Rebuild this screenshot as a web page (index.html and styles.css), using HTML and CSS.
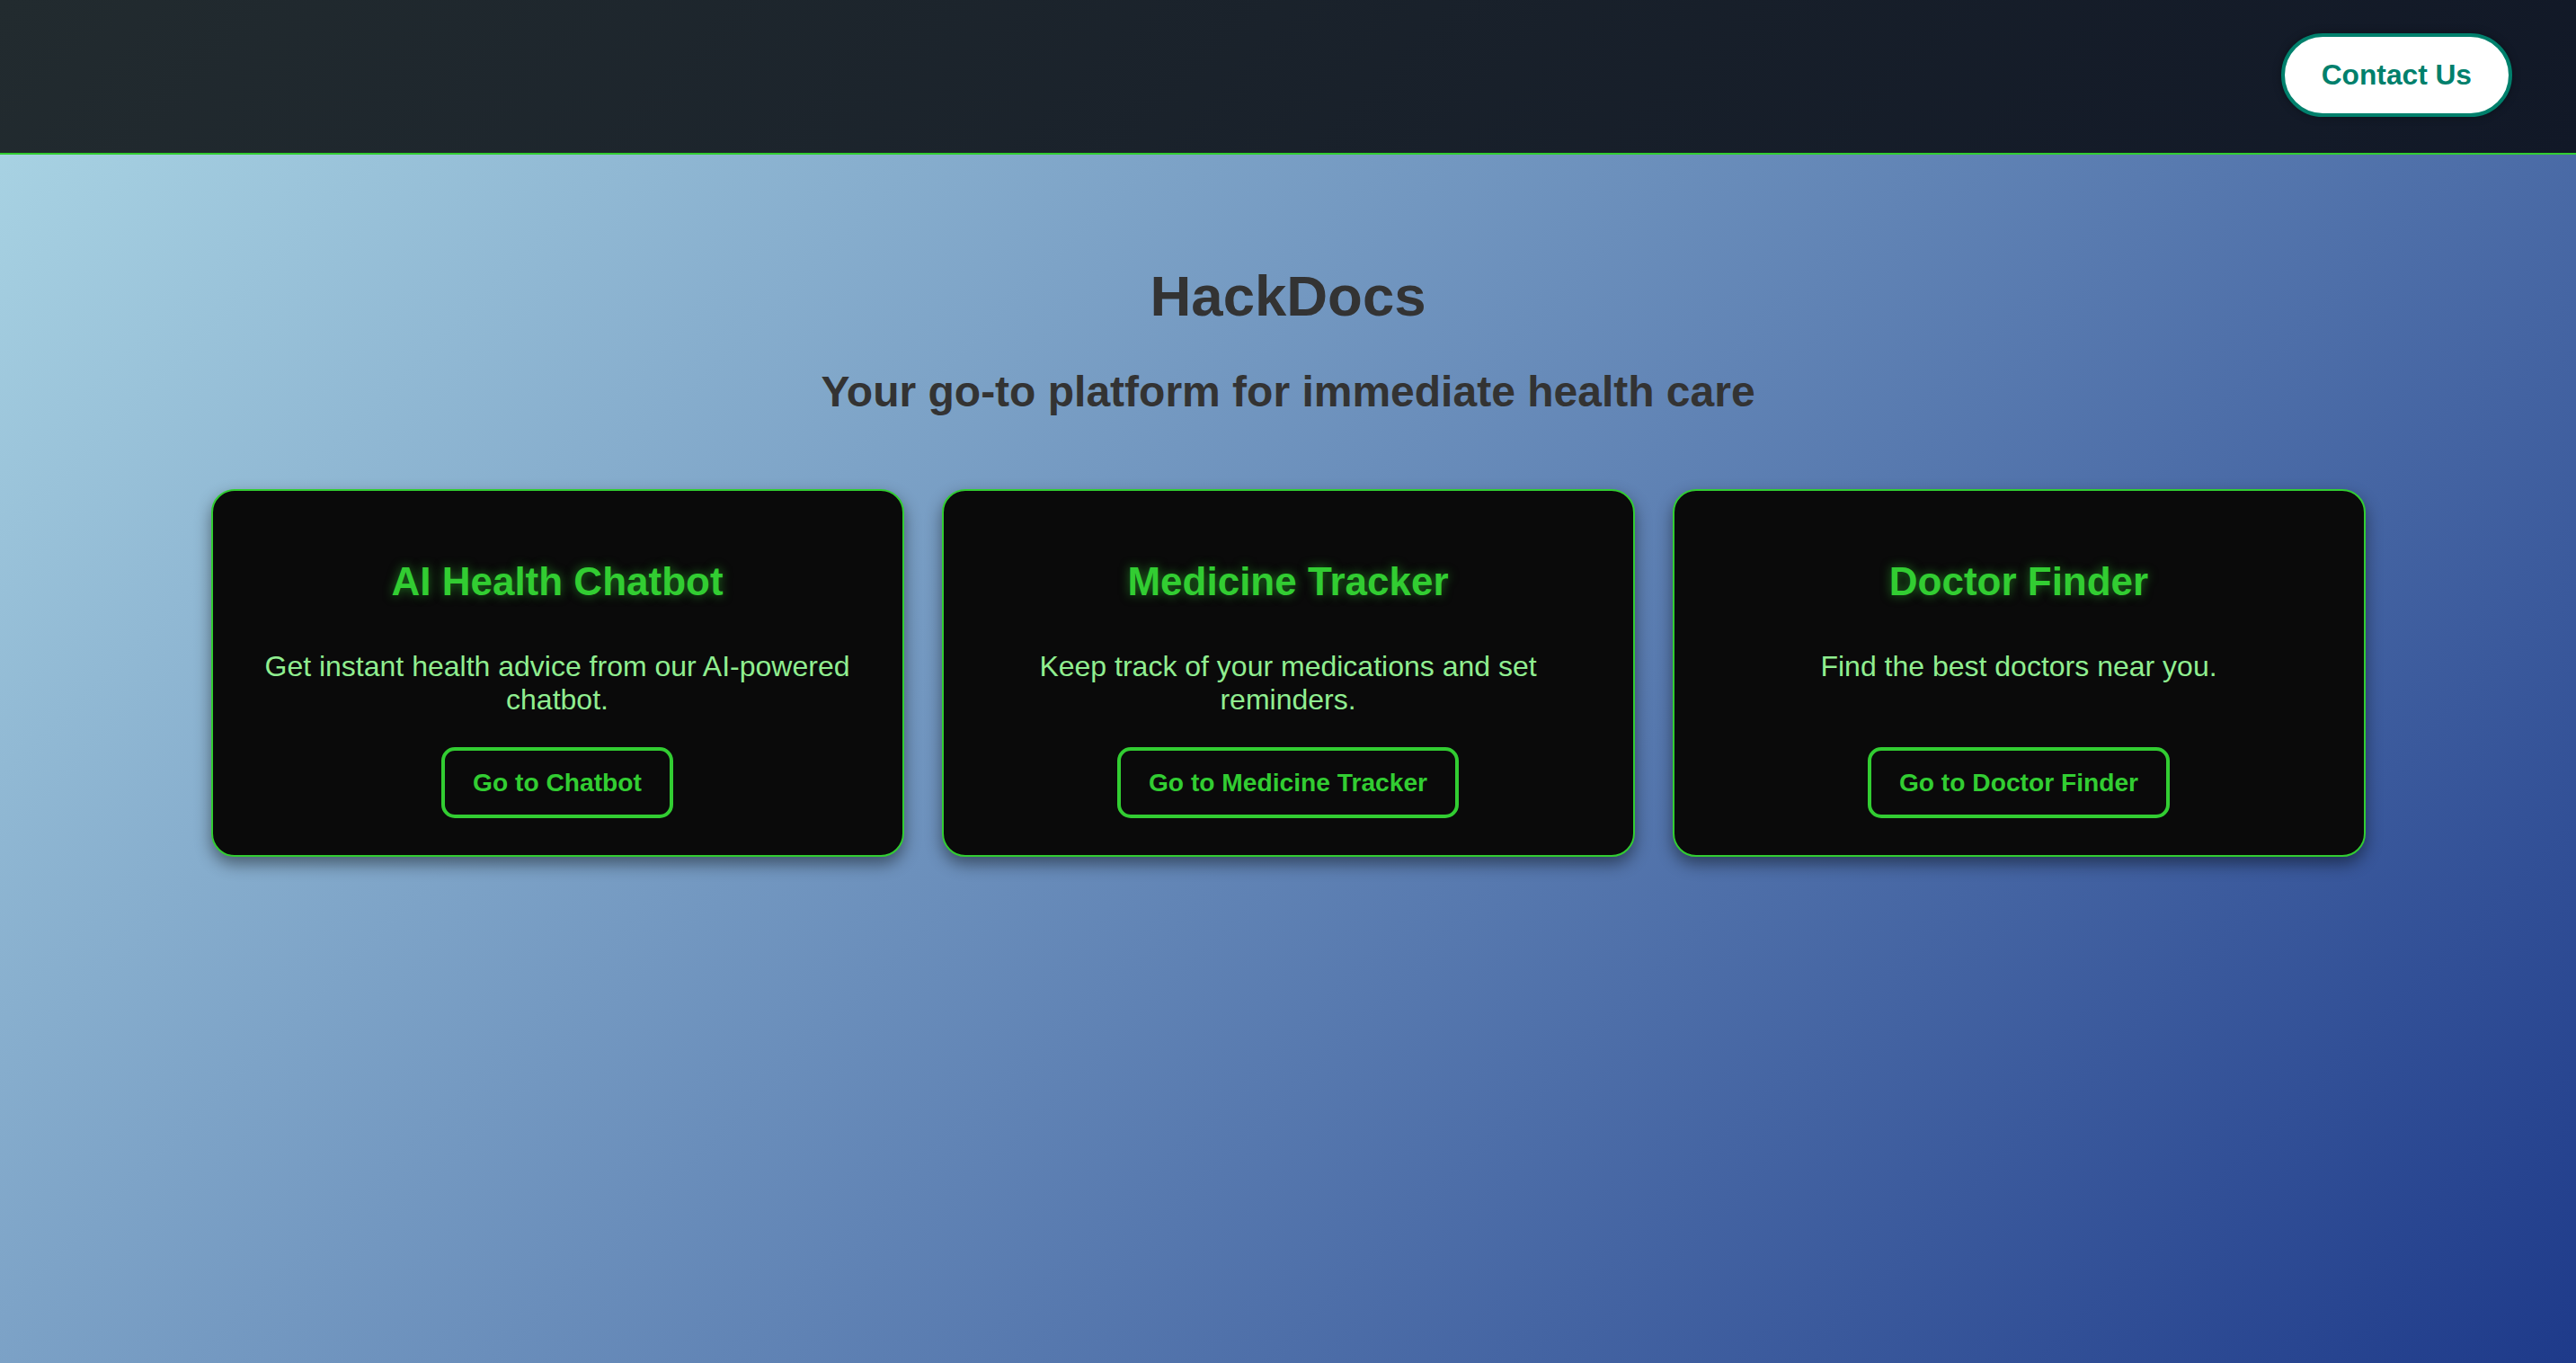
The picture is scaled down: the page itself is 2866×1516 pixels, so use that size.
FILE: index.html
```html
<!DOCTYPE html>
<html lang="en">
<head>
<meta charset="utf-8">
<title>HackDocs</title>
<link rel="stylesheet" href="styles.css">
</head>
<body>
<header class="topbar">
  <a class="contact-btn" href="#">Contact Us</a>
</header>
<main class="hero">
  <h1 class="hero-title">HackDocs</h1>
  <h2 class="hero-subtitle">Your go-to platform for immediate health care</h2>
  <section class="features">
    <article class="card">
      <h3 class="card-title">AI Health Chatbot</h3>
      <p class="card-text">Get instant health advice from our AI-powered chatbot.</p>
      <a class="card-btn" href="#">Go to Chatbot</a>
    </article>
    <article class="card">
      <h3 class="card-title">Medicine Tracker</h3>
      <p class="card-text">Keep track of your medications and set reminders.</p>
      <a class="card-btn" href="#">Go to Medicine Tracker</a>
    </article>
    <article class="card">
      <h3 class="card-title">Doctor Finder</h3>
      <p class="card-text">Find the best doctors near you.</p>
      <a class="card-btn" href="#">Go to Doctor Finder</a>
    </article>
  </section>
</main>
</body>
</html>
```

FILE: styles.css
```css
html {
  height: 100%;
}

body {
  margin: 0;
  min-height: 100%;
  font-family: "Liberation Sans", Arial, sans-serif;
  background: linear-gradient(135deg, #add8e6 0%, #1e3a8a 100%);
  color: #333333;
}

.topbar {
  box-sizing: border-box;
  height: 172px;
  padding: 0 71px 4px;
  display: flex;
  align-items: center;
  justify-content: flex-end;
  background: linear-gradient(135deg, #222b2f 0%, #111827 100%);
  border-bottom: 2px solid #32cd32;
}

.contact-btn {
  display: inline-block;
  padding: 24px 41px;
  background: #ffffff;
  color: #00806c;
  border: 4px solid #00806c;
  border-radius: 60px;
  font-weight: bold;
  font-size: 31.7px;
  text-decoration: none;
  box-shadow: 0 0 10px rgba(0, 0, 0, 0.35);
}

.hero {
  text-align: center;
}

.hero-title {
  margin: 121px 0 0;
  font-size: 63.5px;
  font-weight: bold;
  color: #333333;
}

.hero-subtitle {
  margin: 43px 0 0;
  font-size: 48px;
  font-weight: bold;
  color: #333333;
}

.features {
  margin-top: 81px;
  display: grid;
  grid-template-columns: repeat(3, 771px);
  gap: 42px;
  justify-content: center;
}

.card {
  box-sizing: border-box;
  display: flex;
  flex-direction: column;
  align-items: center;
  padding: 36px 36px 41px;
  background: #0a0a0a;
  border: 2px solid #32cd32;
  border-radius: 26px;
  box-shadow: 0 8px 18px rgba(0, 0, 0, 0.45);
}

.card-title {
  margin: 40px 0 0;
  font-size: 44px;
  font-weight: bold;
  color: #32cd32;
  text-shadow: 0 0 12px rgba(50, 205, 50, 0.55);
}

.card-text {
  flex-grow: 1;
  margin: 51px 0 34px;
  font-size: 32px;
  color: #90ee90;
}

.card-btn {
  display: inline-block;
  padding: 19px 31px;
  color: #32cd32;
  border: 4px solid #32cd32;
  border-radius: 15px;
  font-size: 28.2px;
  font-weight: bold;
  text-decoration: none;
}
```
